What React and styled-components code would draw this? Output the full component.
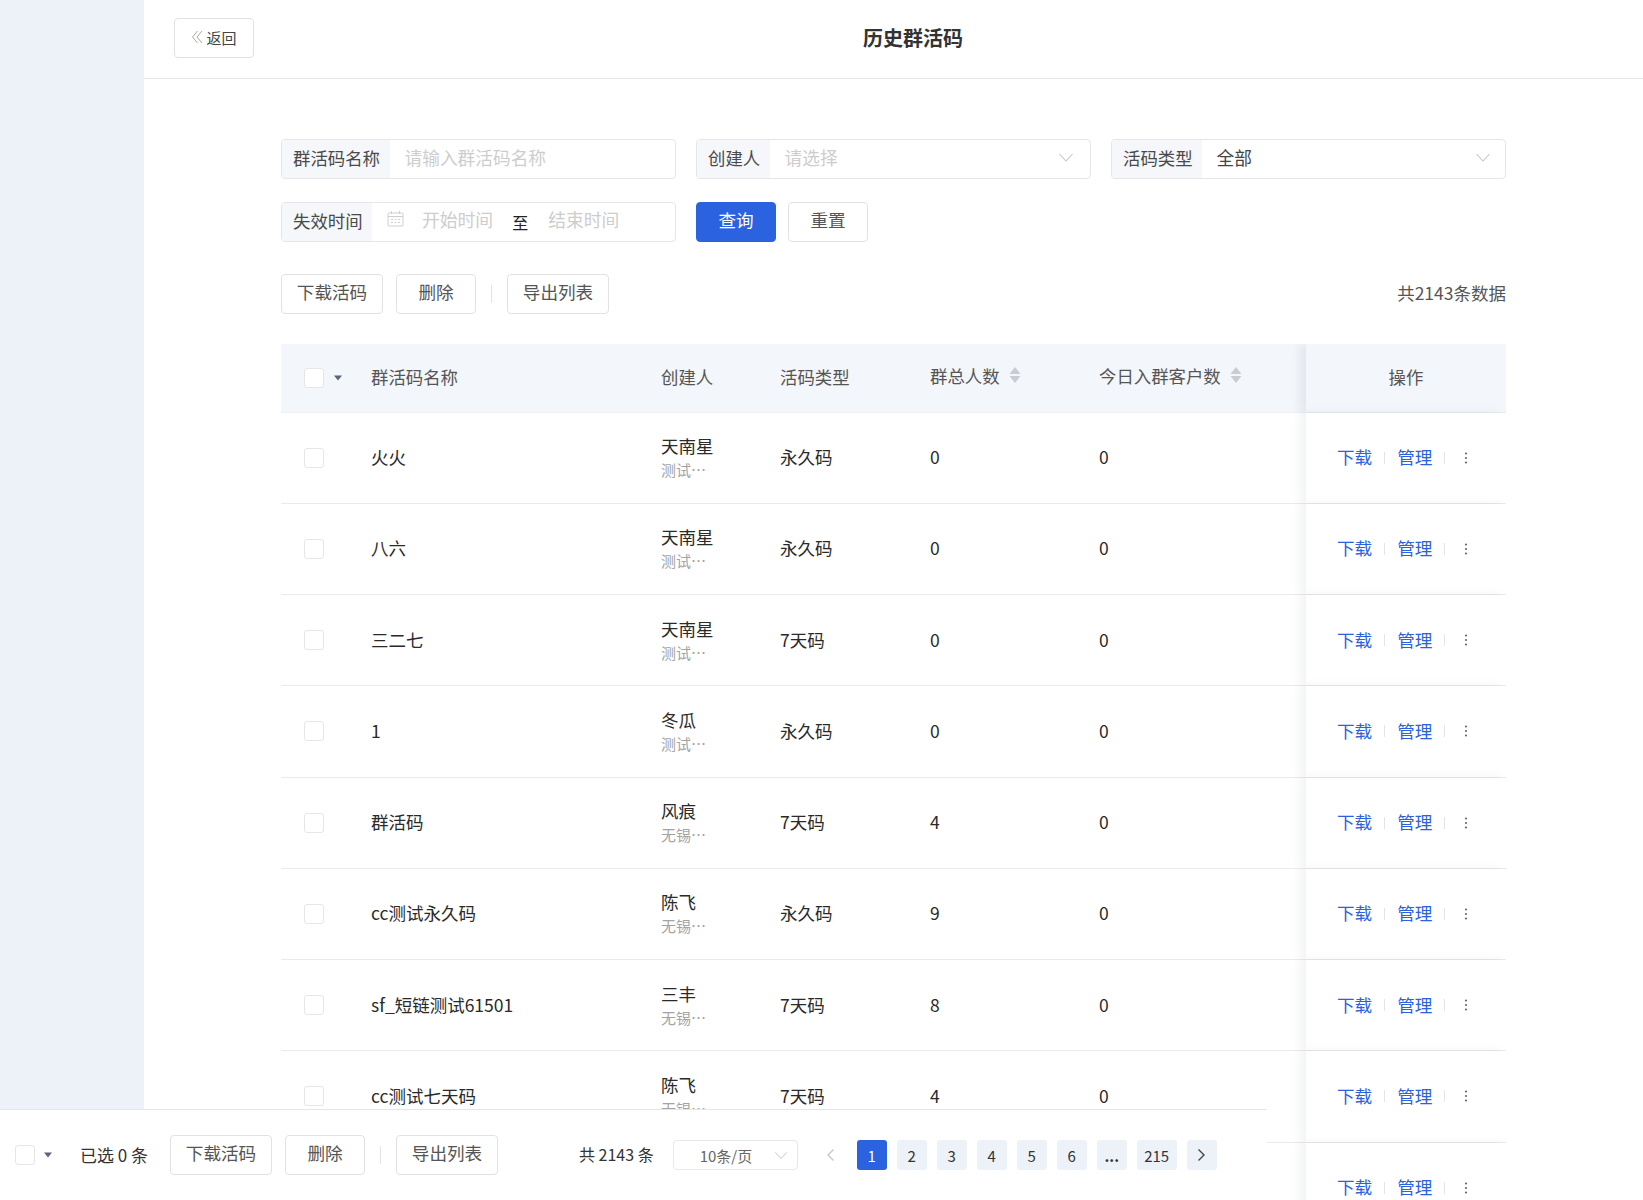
import React from "react";
import styled, { createGlobalStyle } from "styled-components";

const Global = createGlobalStyle`
  html, body { margin: 0; padding: 0; background: #fff; }
  body { font-family: "Noto Sans CJK SC", "Noto Sans", sans-serif; color: #333; overflow: hidden; }
  * { box-sizing: border-box; }
`;

const Page = styled.div`
  position: relative;
  display: flex;
  height: 1200px;
  overflow: hidden;
`;
const Sidebar = styled.aside`
  width: 144px;
  flex: none;
  background: #edf1f8;
`;
const Main = styled.main`
  flex: 1;
  min-width: 0;
`;
const Header = styled.header`
  display: flex;
  align-items: center;
  height: 79px;
  padding: 0 71px 2px 30px;
  border-bottom: 1px solid #e6e6e6;
`;
const BackButton = styled.button`
  display: flex;
  align-items: center;
  justify-content: center;
  gap: 3px;
  width: 80px;
  height: 40px;
  padding: 0 0 2px;
  background: #fff;
  border: 1px solid #e2e2e2;
  border-radius: 4px;
  font: inherit;
  font-size: 15px;
  color: #444;
`;
const Title = styled.h1`
  flex: 1;
  margin: 0;
  padding-bottom: 2px;
  text-align: center;
  font-size: 20px;
  font-weight: 700;
  color: #333;
`;
const Content = styled.div`
  padding: 60px 137px 0;
`;
const FilterGrid = styled.div`
  display: grid;
  grid-template-columns: repeat(3, 1fr);
  column-gap: 20px;
  row-gap: 23px;
`;
const Field = styled.div`
  display: flex;
  height: 40px;
  border: 1px solid #e6e6e6;
  border-radius: 4px;
  overflow: hidden;
`;
const FieldLabel = styled.div`
  display: flex;
  align-items: center;
  flex: none;
  width: ${(p) => p.$w}px;
  padding: 0 0 4px 11px;
  background: #f5f7fb;
  font-size: 17.4px;
  color: #4a4a4a;
  white-space: nowrap;
`;
const FieldValue = styled.div`
  flex: 1;
  display: flex;
  align-items: center;
  justify-content: space-between;
  padding: 0 ${(p) => (p.$filled ? 14 : 16)}px 4px 14.5px;
  font-size: 17.7px;
  color: ${(p) => (p.$filled ? "#444" : "#cdcdcd")};
`;
const RangeValue = styled.div`
  flex: 1;
  display: flex;
  align-items: center;
  padding: 0 0 6px 15px;
  font-size: 17.8px;
  color: #cdcdcd;
  white-space: nowrap;
`;
const RangeStart = styled.span`
  margin-left: 18px;
`;
const RangeTo = styled.span`
  margin: 5px 20px 0 19px;
  font-size: 16px;
  color: #222;
`;
const ActionRow = styled.div`
  display: flex;
  gap: 12px;
`;
const Button = styled.button`
  flex: none;
  width: ${(p) => p.$w || 80}px;
  height: 40px;
  padding: 0 0 5px;
  background: ${(p) => (p.$primary ? "#2b62e0" : "#fff")};
  border: 1px solid ${(p) => (p.$primary ? "#2b62e0" : "#e2e2e2")};
  border-radius: 4px;
  font: inherit;
  font-size: 17.6px;
  color: ${(p) => (p.$primary ? "#fff" : "#555")};
`;
const Toolbar = styled.div`
  display: flex;
  align-items: center;
  gap: 13px;
  margin-top: 32px;
`;
const Divider = styled.span`
  flex: none;
  width: 1px;
  height: 18px;
  margin: 0 2px;
  background: #e4e4e4;
`;
const Total = styled.div`
  margin-left: auto;
  padding-bottom: 4px;
  font-size: 17.5px;
  color: #555;
`;
const columns = "90px 290px 119px 150px 169px 207px 200px";
const Table = styled.div`
  margin-top: 30px;
`;
const HeadRow = styled.div`
  display: grid;
  grid-template-columns: ${columns};
  height: 68.5px;
  background: #f3f6fa;
  border-bottom: 1px solid #edf0f6;
  font-size: 17.4px;
  color: #555;
`;
const Row = styled.div`
  display: grid;
  grid-template-columns: ${columns};
  height: 91.25px;
  border-bottom: 1px solid #ebebee;
  font-size: 17.5px;
  color: #2a2a2a;
`;
const Cell = styled.div`
  display: flex;
  align-items: center;
  padding-bottom: 2px;
  white-space: nowrap;
`;
const CheckCell = styled.div`
  display: flex;
  align-items: center;
  padding-left: 23px;
  gap: 10px;
`;
const SortCell = styled(Cell)`
  gap: 9px;
  padding-bottom: 5px;
`;
const Checkbox = styled.span`
  display: block;
  flex: none;
  width: 20px;
  height: 20px;
  background: #fff;
  border: 1px solid #e6e6e6;
  border-radius: 3px;
`;
const CreatorCell = styled.div`
  display: flex;
  flex-direction: column;
  justify-content: center;
  padding-top: 1px;
`;
const CreatorName = styled.div`
  font-size: 17.5px;
  line-height: 24px;
  color: #2a2a2a;
`;
const CreatorOrg = styled.div`
  font-size: 15px;
  line-height: 24px;
  color: #a3a3a3;
`;
const OpHeadCell = styled(Cell)`
  position: relative;
  justify-content: center;
  box-shadow: -6px 0 10px rgba(40, 50, 80, 0.08);
  clip-path: inset(0 0 -20px -24px);
  background: #f3f6fa;
`;
const OpCell = styled(Cell)`
  position: relative;
  padding-left: 31px;
  box-shadow: -6px 0 10px rgba(40, 50, 80, 0.06);
  background: #fff;
`;
const OpLink = styled.a`
  font-size: 17.6px;
  color: #2b62e0;
`;
const OpSep = styled.span`
  width: 1px;
  height: 12px;
  margin: 2px 12px 0;
  background: #e4e4e4;
`;
const DotsWrap = styled.span`
  display: flex;
  margin: 2px 0 0 7px;
`;
const BottomBar = styled.div`
  position: absolute;
  z-index: 2;
  left: 0;
  top: 1109px;
  width: 1267px;
  height: 91px;
  display: flex;
  align-items: center;
  padding: 0 0 0 15px;
  background: #fff;
  border-top: 1px solid #e6e6e6;
`;
const BarCaret = styled.span`
  display: flex;
  margin-left: 9px;
`;
const Selected = styled.span`
  width: 90px;
  margin-left: 28px;
  padding-bottom: 2px;
  font-size: 17px;
  color: #333;
  white-space: nowrap;
`;
const BarActions = styled.div`
  display: flex;
  align-items: center;
  gap: 13px;
`;
const PageCount = styled.span`
  margin-left: 81px;
  padding-bottom: 2px;
  font-size: 16px;
  color: #333;
  white-space: nowrap;
`;
const PageSize = styled.div`
  display: flex;
  align-items: center;
  justify-content: space-between;
  width: 125px;
  height: 30px;
  margin-left: 19px;
  padding: 0 9px 0 26px;
  border: 1px solid #e8e8e8;
  border-radius: 4px;
  font-size: 15px;
  color: #666;
`;
const Pager = styled.div`
  display: flex;
  align-items: center;
  gap: 10px;
  margin-left: 23px;
`;
const PrevBtn = styled.span`
  display: flex;
  align-items: center;
  width: 26px;
  height: 30px;
  padding-left: 5px;
`;
const PageBtn = styled.span`
  display: flex;
  align-items: center;
  justify-content: center;
  width: ${(p) => p.$w || 30}px;
  height: 30px;
  border-radius: 3px;
  font-size: 15px;
  font-weight: ${(p) => (p.$bold ? 700 : 400)};
  background: ${(p) => (p.$active ? "#2b62e0" : "#edf1f8")};
  color: ${(p) => (p.$active ? "#fff" : "#333")};
`;

const Chevron = ({ size = 16, color = "#c4c4c4" }) => (
  <svg width={size} height={size} viewBox="0 0 16 16" fill="none">
    <path d="M1.5 5l6.5 7 6.5-7" stroke={color} strokeWidth="1.1" />
  </svg>
);
const Caret = () => (
  <svg width="8" height="6" viewBox="0 0 8 6">
    <path d="M0 0.5h8L4 5.5z" fill="#5b6478" />
  </svg>
);
const Sort = () => (
  <svg width="12" height="16" viewBox="0 0 12 16">
    <path d="M6 0l5.5 7H.5z" fill="#c9ccd1" />
    <path d="M.5 9h11L6 16z" fill="#c9ccd1" />
  </svg>
);
const Dots = () => (
  <svg width="4" height="12" viewBox="0 0 4 12">
    <circle cx="2" cy="1.5" r="1.1" fill="#666" />
    <circle cx="2" cy="6" r="1.1" fill="#666" />
    <circle cx="2" cy="10.5" r="1.1" fill="#666" />
  </svg>
);
const Calendar = () => (
  <svg width="17" height="16" viewBox="0 0 17 16" fill="none" stroke="#cfcfcf">
    <rect x="1" y="2" width="15" height="13" rx="1" />
    <path d="M1 5.5h15M4.5 0v3M12.5 0v3" />
    <path d="M4 8.5h9M4 11.5h9" strokeDasharray="2 1.5" />
  </svg>
);
const DoubleLeft = () => (
  <svg width="12" height="14" viewBox="0 0 12 14" fill="none" stroke="#a9a9a9">
    <path d="M6.5 1L1.5 7l5 6M11 1L6 7l5 6" />
  </svg>
);
const ArrowLeft = () => (
  <svg width="9" height="14" viewBox="0 0 9 14" fill="none" stroke="#c8c8c8" strokeWidth="1.4">
    <path d="M7.5 1.5L2 7l5.5 5.5" />
  </svg>
);
const ArrowRight = () => (
  <svg width="9" height="14" viewBox="0 0 9 14" fill="none" stroke="#444" strokeWidth="1.4">
    <path d="M1.5 1.5L7 7l-5.5 5.5" />
  </svg>
);

const rows = [
  ["火火", "天南星", "测试…", "永久码", "0"],
  ["八六", "天南星", "测试…", "永久码", "0"],
  ["三二七", "天南星", "测试…", "7天码", "0"],
  ["1", "冬瓜", "测试…", "永久码", "0"],
  ["群活码", "风痕", "无锡…", "7天码", "4"],
  ["cc测试永久码", "陈飞", "无锡…", "永久码", "9"],
  ["sf_短链测试61501", "三丰", "无锡…", "7天码", "8"],
  ["cc测试七天码", "陈飞", "无锡…", "7天码", "4"],
];

const Ops = () => (
  <OpCell>
    <OpLink>下载</OpLink>
    <OpSep />
    <OpLink>管理</OpLink>
    <OpSep />
    <DotsWrap>
      <Dots />
    </DotsWrap>
  </OpCell>
);

export default function App() {
  return (
    <Page>
      <Global />
      <Sidebar />
      <Main>
        <Header>
          <BackButton>
            <DoubleLeft />
            返回
          </BackButton>
          <Title>历史群活码</Title>
        </Header>
        <Content>
          <FilterGrid>
            <Field>
              <FieldLabel $w={108}>群活码名称</FieldLabel>
              <FieldValue>请输入群活码名称</FieldValue>
            </Field>
            <Field>
              <FieldLabel $w={73}>创建人</FieldLabel>
              <FieldValue>
                请选择
                <Chevron />
              </FieldValue>
            </Field>
            <Field>
              <FieldLabel $w={90}>活码类型</FieldLabel>
              <FieldValue $filled>
                全部
                <Chevron />
              </FieldValue>
            </Field>
            <Field>
              <FieldLabel $w={90}>失效时间</FieldLabel>
              <RangeValue>
                <Calendar />
                <RangeStart>开始时间</RangeStart>
                <RangeTo>至</RangeTo>
                结束时间
              </RangeValue>
            </Field>
            <ActionRow>
              <Button $primary>查询</Button>
              <Button>重置</Button>
            </ActionRow>
          </FilterGrid>
          <Toolbar>
            <Button $w={102}>下载活码</Button>
            <Button>删除</Button>
            <Divider />
            <Button $w={102}>导出列表</Button>
            <Total>共2143条数据</Total>
          </Toolbar>
          <Table>
            <HeadRow>
              <CheckCell>
                <Checkbox />
                <Caret />
              </CheckCell>
              <Cell>群活码名称</Cell>
              <Cell>创建人</Cell>
              <Cell>活码类型</Cell>
              <SortCell>
                群总人数
                <Sort />
              </SortCell>
              <SortCell>
                今日入群客户数
                <Sort />
              </SortCell>
              <OpHeadCell>操作</OpHeadCell>
            </HeadRow>
            {rows.map((r, i) => (
              <Row key={i}>
                <CheckCell>
                  <Checkbox />
                </CheckCell>
                <Cell>{r[0]}</Cell>
                <CreatorCell>
                  <CreatorName>{r[1]}</CreatorName>
                  <CreatorOrg>{r[2]}</CreatorOrg>
                </CreatorCell>
                <Cell>{r[3]}</Cell>
                <Cell>{r[4]}</Cell>
                <Cell>0</Cell>
                <Ops />
              </Row>
            ))}
            <Row>
              <Cell />
              <Cell />
              <Cell />
              <Cell />
              <Cell />
              <Cell />
              <Ops />
            </Row>
          </Table>
        </Content>
      </Main>
      <BottomBar>
        <Checkbox />
        <BarCaret>
          <Caret />
        </BarCaret>
        <Selected>已选 0 条</Selected>
        <BarActions>
          <Button $w={102}>下载活码</Button>
          <Button>删除</Button>
          <Divider />
          <Button $w={102}>导出列表</Button>
        </BarActions>
        <PageCount>共 2143 条</PageCount>
        <PageSize>
          10条/页
          <Chevron size={14} />
        </PageSize>
        <Pager>
          <PrevBtn>
            <ArrowLeft />
          </PrevBtn>
          <PageBtn $active>1</PageBtn>
          <PageBtn>2</PageBtn>
          <PageBtn>3</PageBtn>
          <PageBtn>4</PageBtn>
          <PageBtn>5</PageBtn>
          <PageBtn>6</PageBtn>
          <PageBtn $bold>...</PageBtn>
          <PageBtn $w={40}>215</PageBtn>
          <PageBtn>
            <ArrowRight />
          </PageBtn>
        </Pager>
      </BottomBar>
    </Page>
  );
}
